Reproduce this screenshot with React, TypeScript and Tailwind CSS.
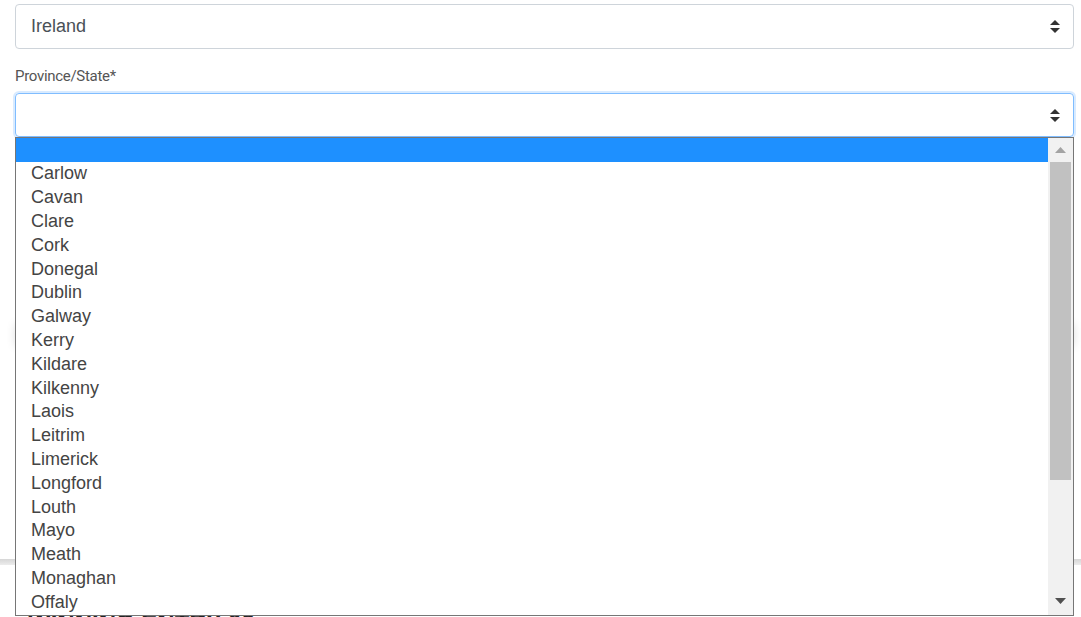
import React from 'react';

const counties = [
  'Carlow',
  'Cavan',
  'Clare',
  'Cork',
  'Donegal',
  'Dublin',
  'Galway',
  'Kerry',
  'Kildare',
  'Kilkenny',
  'Laois',
  'Leitrim',
  'Limerick',
  'Longford',
  'Louth',
  'Mayo',
  'Meath',
  'Monaghan',
  'Offaly',
];

const SortIcon: React.FC = () => (
  <svg width="10" height="13" viewBox="0 0 10 13" className="shrink-0">
    <path d="M5 0 L10 5 L0 5 Z" fill="#333" />
    <path d="M0 8 L10 8 L5 13 Z" fill="#333" />
  </svg>
);

const App: React.FC = () => {
  return (
    <div className="relative h-[617px] overflow-hidden bg-white font-['Liberation_Sans',Arial,sans-serif]">
      <div className="pl-[15px] pr-[7px] pt-[4px]">
        {/* Country */}
        <div className="flex h-[45px] items-center justify-between rounded-[4px] border border-[#ced4da] pl-[15px] pr-[13px]">
          <span className="text-[18px] text-[#495057]">Ireland</span>
          <SortIcon />
        </div>

        {/* Province */}
        <label className="mt-[17px] block font-['Roboto',sans-serif] text-[15px] leading-[20px] tracking-[-0.3px] text-[#555]">
          Province/State*
        </label>
        <div className="relative mt-[7px]">
          <div className="flex h-[44px] items-center justify-end rounded-[4px] border border-[#80bdff] pr-[13px] shadow-[0_0_0_2px_rgba(0,123,255,0.15)]">
            <SortIcon />
          </div>

          {/* Open list */}
          <div className="absolute left-0 right-0 top-full z-10 flex h-[479px] border border-[#767676] bg-white">
            <div className="flex-1">
              <div className="h-[24px] bg-[#1e90ff]" />
              {counties.map((c) => (
                <div key={c} className="flex h-[23.8px] items-center pb-[1px] pl-[15px] text-[18px] leading-[20px] text-[#444]">
                  {c}
                </div>
              ))}
            </div>
            <div className="flex w-[25px] flex-col bg-[#f1f1f1]">
              <div className="flex h-[24px] items-center justify-center">
                <svg width="11" height="6" viewBox="0 0 11 6">
                  <path d="M5.5 0 L11 6 L0 6 Z" fill="#a3a3a3" />
                </svg>
              </div>
              <div className="mx-[2px] h-[318px] bg-[#c1c1c1]" />
              <div className="flex-1" />
              <div className="flex h-[24px] items-center justify-center pb-[4px]">
                <svg width="11" height="6" viewBox="0 0 11 6">
                  <path d="M0 0 L11 0 L5.5 6 Z" fill="#505050" />
                </svg>
              </div>
            </div>
          </div>
        </div>
      </div>

      {/* Page content behind the list */}
      <div className="flex flex-col">
        <div className="ml-[15px] mr-[7px] mt-[186px] h-[24px] rounded-[4px] shadow-[0_0_10px_rgba(0,0,0,0.12)]" />
        <div className="mt-[212px] h-[6px] bg-gradient-to-b from-[#d6d6d6] to-[#ececec]" />
        <h2 className="mt-[44px] pl-[28px] text-[24px] font-bold uppercase leading-[28px] text-[#222]">
          Winning Entry 06
        </h2>
      </div>
    </div>
  );
};

export default App;
